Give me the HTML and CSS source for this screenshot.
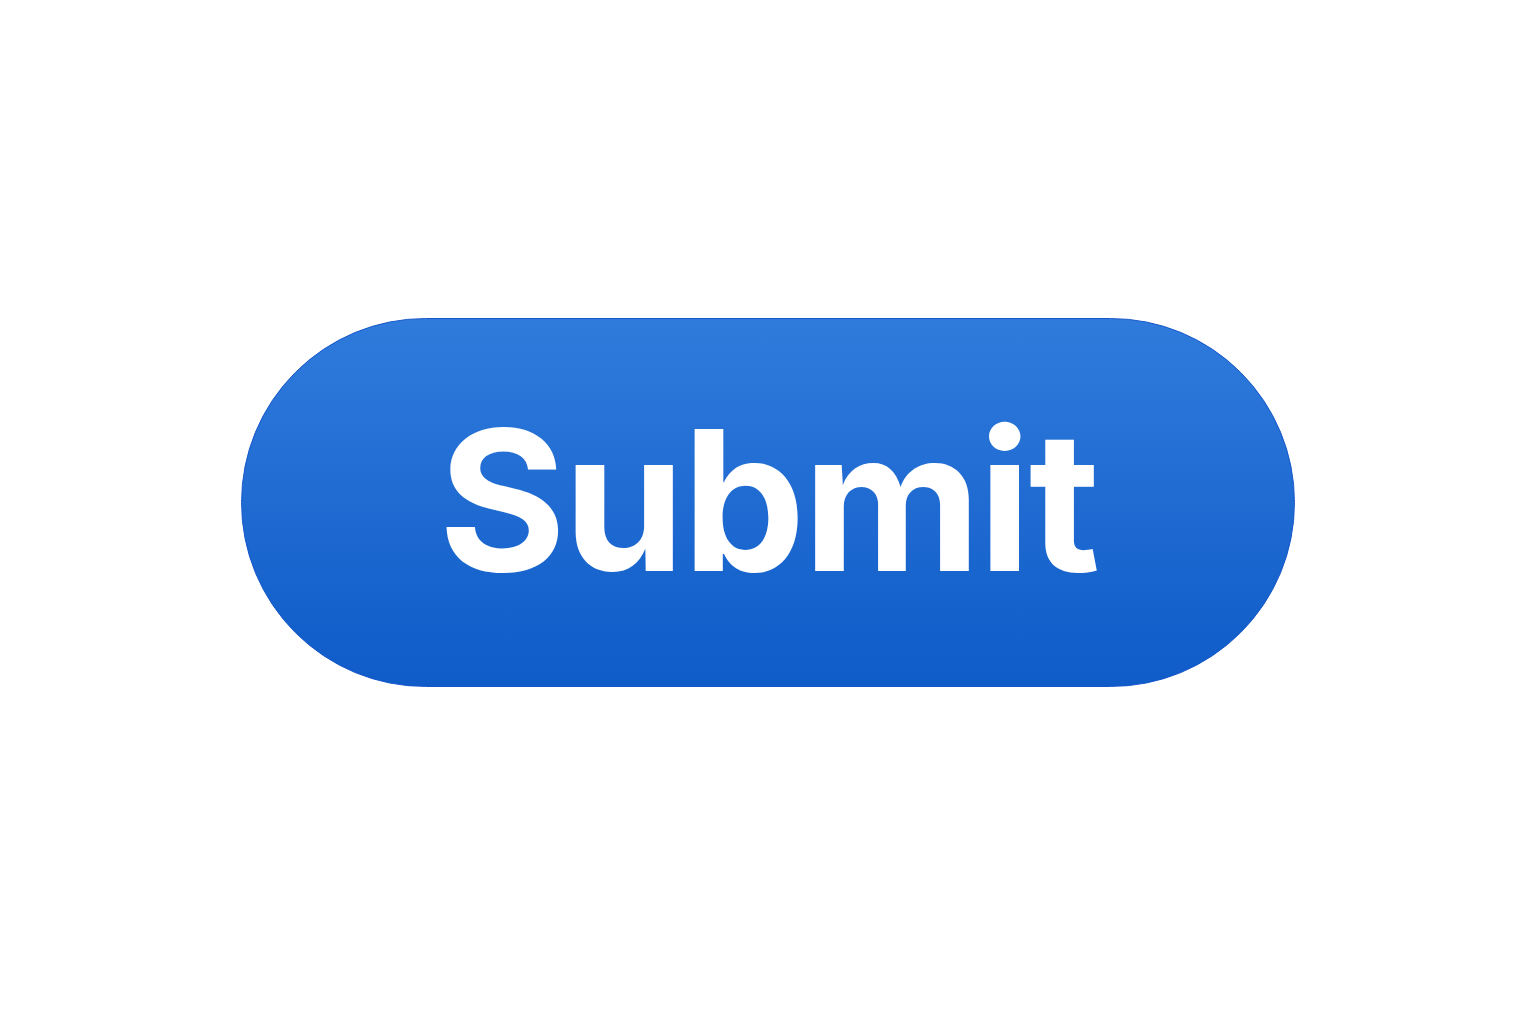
FILE: index.html
```html
<!DOCTYPE html>
<html lang="en">
<head>
  <meta charset="UTF-8" />
  <meta name="viewport" content="width=device-width, initial-scale=1.0" />
  <title>Submit</title>
  <link rel="stylesheet" href="styles.css">
</head>
<body>
  <main class="stage">
    <button type="submit" class="submit-btn">Submit</button>
  </main>
</body>
</html>
```

FILE: styles.css
```css
:root {
  --bg: #ffffff;
  --btn-top: #2f7bdc;
  --btn-bottom: #0f5bc8;
  --btn-edge: #1657c9;
}

html, body {
  margin: 0;
  background: var(--bg);
}

.stage {
  display: flex;
  justify-content: center;
  padding-top: 318px;
}

.submit-btn {
  width: 1054px;
  height: 369px;
  padding: 0 0 4px;
  border: 1px solid var(--btn-edge);
  border-radius: 185px;
  background: linear-gradient(180deg, var(--btn-top), var(--btn-bottom));
  color: #ffffff;
  font-family: 'Inter', sans-serif;
  font-weight: 700;
  font-size: 195px;
  line-height: 1;
  letter-spacing: -2.5px;
  cursor: pointer;
}
```
